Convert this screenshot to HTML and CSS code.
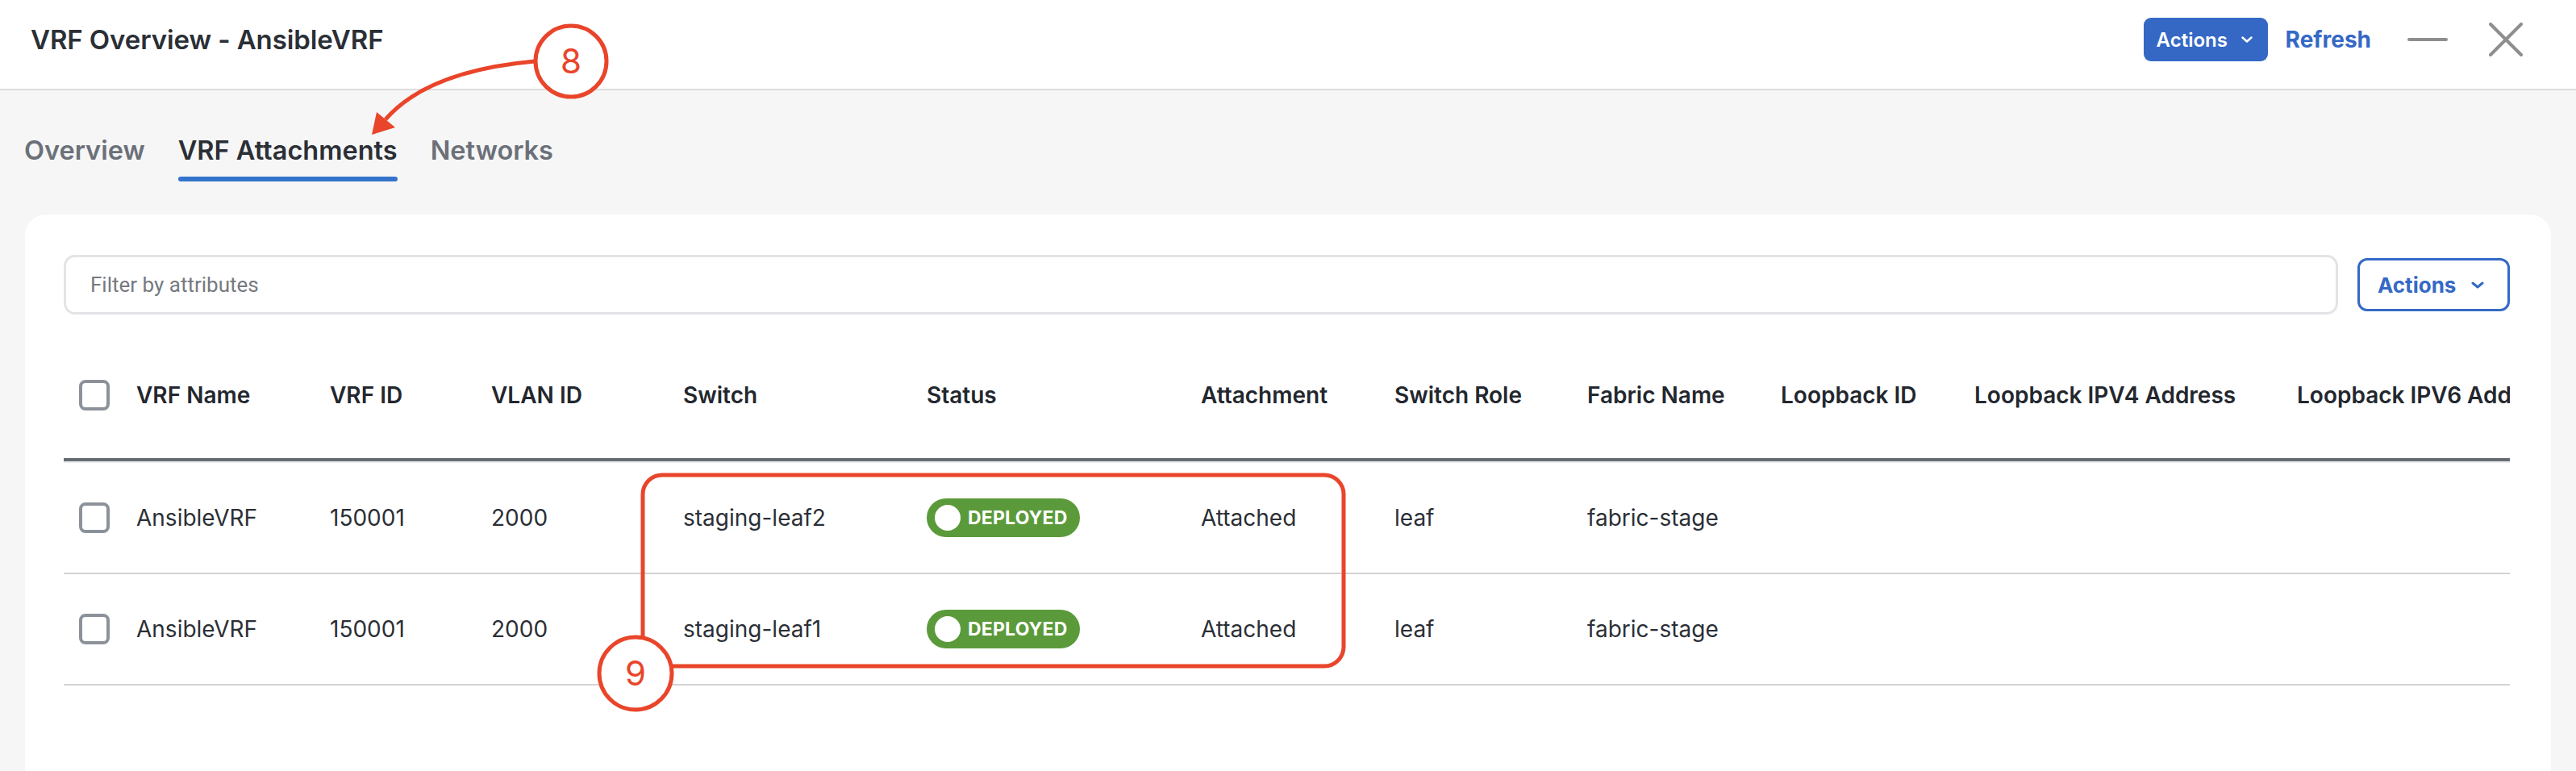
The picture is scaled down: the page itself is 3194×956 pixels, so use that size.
FILE: index.html
```html
<!DOCTYPE html>
<html lang="en">
<head>
<meta charset="utf-8">
<title>VRF Overview - AnsibleVRF</title>
<link rel="stylesheet" href="styles.css">
</head>
<body>
<div class="page">
  <header class="topbar">
    <h1 class="title">VRF Overview - AnsibleVRF</h1>
    <div class="top-actions">
      <button class="btn-primary">Actions
        <svg class="chev-sm" viewBox="0 0 14 8"><polyline points="1.5,1.5 7,6.5 12.5,1.5"/></svg>
      </button>
      <button class="link-btn">Refresh</button>
      <span class="icon-min"><svg viewBox="0 0 50 6"><line x1="2" y1="3" x2="48" y2="3"/></svg></span>
      <span class="icon-close"><svg viewBox="0 0 42 42"><line x1="2" y1="2" x2="40" y2="40"/><line x1="40" y1="2" x2="2" y2="40"/></svg></span>
    </div>
  </header>

  <nav class="tabs">
    <a class="tab">Overview</a>
    <a class="tab active">VRF Attachments</a>
    <a class="tab">Networks</a>
  </nav>

  <section class="card">
    <div class="toolbar">
      <div class="filter">Filter by attributes</div>
      <button class="btn-outline">Actions
        <svg class="chev" viewBox="0 0 16 9"><polyline points="2,2 8,7 14,2"/></svg>
      </button>
    </div>

    <div class="table">
      <div class="row head">
        <div class="cell check"><span class="box"></span></div>
        <div class="cell">VRF Name</div>
        <div class="cell">VRF ID</div>
        <div class="cell">VLAN ID</div>
        <div class="cell">Switch</div>
        <div class="cell">Status</div>
        <div class="cell">Attachment</div>
        <div class="cell">Switch Role</div>
        <div class="cell">Fabric Name</div>
        <div class="cell">Loopback ID</div>
        <div class="cell">Loopback IPV4 Address</div>
        <div class="cell">Loopback IPV6 Address</div>
      </div>
      <div class="row body first">
        <div class="cell check"><span class="box"></span></div>
        <div class="cell">AnsibleVRF</div>
        <div class="cell">150001</div>
        <div class="cell">2000</div>
        <div class="cell">staging-leaf2</div>
        <div class="cell"><span class="badge"><span class="dot"></span>DEPLOYED</span></div>
        <div class="cell">Attached</div>
        <div class="cell">leaf</div>
        <div class="cell">fabric-stage</div>
        <div class="cell"></div>
        <div class="cell"></div>
        <div class="cell"></div>
      </div>
      <div class="row body">
        <div class="cell check"><span class="box"></span></div>
        <div class="cell">AnsibleVRF</div>
        <div class="cell">150001</div>
        <div class="cell">2000</div>
        <div class="cell">staging-leaf1</div>
        <div class="cell"><span class="badge"><span class="dot"></span>DEPLOYED</span></div>
        <div class="cell">Attached</div>
        <div class="cell">leaf</div>
        <div class="cell">fabric-stage</div>
        <div class="cell"></div>
        <div class="cell"></div>
        <div class="cell"></div>
      </div>
    </div>
  </section>

  <svg class="annot" viewBox="0 0 3194 956" width="3194" height="956">
    <path class="a-line" d="M663,76 Q530,88 478,148"/>
    <polygon class="a-fill" points="461,167 467,139 490,158"/>
    <circle class="a-circle" cx="708" cy="76" r="44"/>
    <text class="a-num" x="708" y="91">8</text>
    <rect class="a-line" x="797" y="589" width="869" height="237" rx="24" ry="24"/>
    <circle class="a-circle" cx="788" cy="835" r="45"/>
    <text class="a-num" x="788" y="850">9</text>
  </svg>
</div>
</body>
</html>
```

FILE: styles.css
```css
* { box-sizing: border-box; }

html, body {
  margin: 0;
  padding: 0;
  width: 3194px;
  height: 956px;
  overflow: hidden;
  background: #f6f6f6;
  font-family: Inter, "Noto Sans", sans-serif;
  color: #2b2f36;
}

.page {
  position: relative;
  width: 3194px;
  height: 956px;
  display: flex;
  flex-direction: column;
}

/* ---------- top bar ---------- */
.topbar {
  height: 112px;
  flex: none;
  background: #ffffff;
  border-bottom: 2px solid #dedede;
  display: flex;
  justify-content: space-between;
  align-items: flex-start;
  padding: 22px 66px 0 38px;
}

.title {
  margin: 0;
  font-size: 33px;
  font-weight: 600;
  line-height: 54px;
  color: #2b2f36;
  letter-spacing: -0.1px;
}

.top-actions {
  display: flex;
  align-items: center;
  height: 54px;
}

button {
  font-family: Inter, "Noto Sans", sans-serif;
  cursor: pointer;
}

.btn-primary {
  width: 154px;
  height: 54px;
  border: none;
  border-radius: 9px;
  background: #3568c5;
  color: #ffffff;
  font-size: 24px;
  font-weight: 600;
  display: flex;
  align-items: center;
  padding: 0 0 0 16px;
  gap: 17px;
}

.chev-sm {
  width: 14px;
  height: 8px;
  fill: none;
  stroke: #ffffff;
  stroke-width: 2.4;
  stroke-linecap: round;
  stroke-linejoin: round;
}

.link-btn {
  margin-left: 22px;
  border: none;
  background: none;
  padding: 0;
  color: #3568c5;
  font-size: 28px;
  font-weight: 700;
}

.icon-min {
  margin-left: 45px;
  width: 50px;
  height: 6px;
  display: flex;
}
.icon-min svg { width: 50px; height: 6px; }
.icon-min line, .icon-close line {
  stroke: #8e8e8e;
  stroke-width: 4;
  stroke-linecap: round;
}

.icon-close {
  margin-left: 51px;
  width: 42px;
  height: 42px;
  display: flex;
}
.icon-close svg { width: 42px; height: 42px; }

/* ---------- tabs ---------- */
.tabs {
  flex: none;
  display: flex;
  gap: 41px;
  padding: 56px 0 0 30px;
}

.tab {
  display: flex;
  flex-direction: column;
  gap: 13px;
  font-size: 32.5px;
  font-weight: 600;
  line-height: 38px;
  color: #6b7079;
}
.tab::after {
  content: "";
  display: block;
  height: 6px;
  border-radius: 3px;
  background: transparent;
}
.tab.active { color: #2b2f36; }
.tab.active::after { background: #3373cc; }

/* ---------- card ---------- */
.card {
  flex: 1;
  margin: 41px 31px 0 31px;
  background: #ffffff;
  border-radius: 26px 26px 0 0;
  padding: 50px 51px 0 48px;
  min-width: 0;
}

.toolbar {
  display: flex;
  align-items: center;
  gap: 24px;
}

.filter {
  flex: 1;
  height: 74px;
  border: 3px solid #e3e4e7;
  border-radius: 14px;
  padding-left: 30px;
  display: flex;
  align-items: center;
  font-family: Roboto, "Liberation Sans", sans-serif;
  font-size: 26px;
  color: #767a81;
}

.btn-outline {
  width: 189px;
  height: 66px;
  border: 3px solid #3569c6;
  border-radius: 12px;
  background: #ffffff;
  color: #3569c6;
  font-size: 26px;
  font-weight: 700;
  display: flex;
  align-items: center;
  padding: 0 0 0 22px;
  gap: 19px;
}

.chev {
  width: 16px;
  height: 9px;
  fill: none;
  stroke: #3569c6;
  stroke-width: 3;
  stroke-linecap: round;
  stroke-linejoin: round;
}

/* ---------- table ---------- */
.table {
  margin-top: 22px;
  overflow: hidden;
}

.row {
  display: grid;
  grid-template-columns: 90px 240px 200px 238px 302px 340px 240px 239px 240px 240px 400px 1fr;
  align-items: center;
}

.row.head {
  height: 160px;
  border-bottom: 4px solid #656c73;
  box-shadow: 0 2px 0 #ececec;
  font-size: 28px;
  font-weight: 600;
  color: #23272e;
}

.row.body {
  height: 138px;
  border-bottom: 2px solid #d3d3d3;
  font-size: 28px;
  font-weight: 400;
  color: #2b2f36;
}
.row.body.first { margin-top: 2px; }

.cell {
  white-space: nowrap;
  overflow: hidden;
}

.cell.check {
  padding-left: 19px;
  display: flex;
  align-items: center;
}

.box {
  display: block;
  width: 38px;
  height: 38px;
  border: 4px solid #8c929a;
  border-radius: 8px;
  background: #ffffff;
}

.badge {
  display: inline-flex;
  align-items: center;
  width: 190px;
  height: 48px;
  border-radius: 24px;
  background: #5b9a3a;
  padding-left: 10px;
  gap: 9px;
  color: #ffffff;
  font-size: 23px;
  font-weight: 700;
  letter-spacing: 0.2px;
}

.dot {
  width: 32px;
  height: 32px;
  border-radius: 50%;
  background: #ffffff;
  flex: none;
}

/* ---------- annotations overlay ---------- */
.annot {
  position: absolute;
  left: 0;
  top: 0;
  pointer-events: none;
}

.a-line {
  fill: none;
  stroke: #e9452b;
  stroke-width: 5;
}

.a-fill { fill: #e9452b; }

.a-circle {
  fill: #ffffff;
  stroke: #e9452b;
  stroke-width: 5;
}

.a-num {
  fill: #e9452b;
  font-family: Inter, "Noto Sans", sans-serif;
  font-size: 42px;
  font-weight: 400;
  text-anchor: middle;
}
```
